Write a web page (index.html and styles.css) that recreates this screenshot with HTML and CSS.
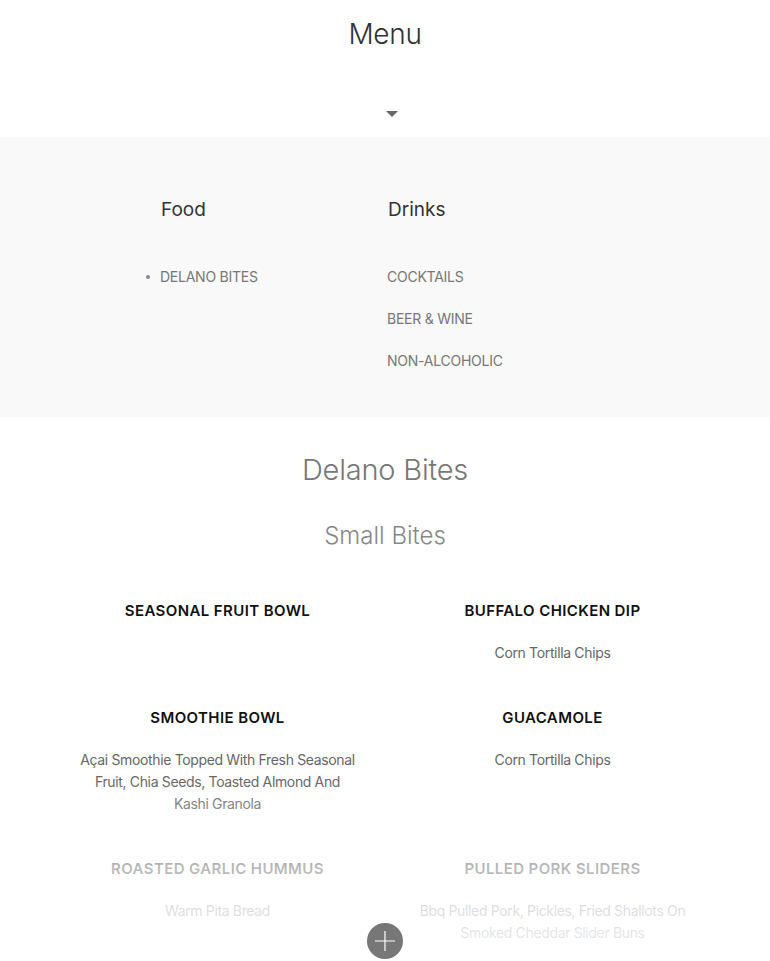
FILE: index.html
```html
<!DOCTYPE html>
<html lang="en">
<head>
    <meta charset="UTF-8">
    <meta name="viewport" content="width=device-width, initial-scale=1.0">
    <title>Menu</title>
    <link rel="stylesheet" href="styles.css">
</head>
<body>
    <header class="page-header">
        <h1>Menu</h1>
        <span class="caret"></span>
    </header>

    <nav class="menu-nav">
        <div class="nav-col">
            <h2>Food</h2>
            <ul class="nav-list bulleted">
                <li>DELANO BITES</li>
            </ul>
        </div>
        <div class="nav-col">
            <h2>Drinks</h2>
            <ul class="nav-list">
                <li>COCKTAILS</li>
                <li>BEER &amp; WINE</li>
                <li>NON-ALCOHOLIC</li>
            </ul>
        </div>
    </nav>

    <section class="menu-section">
        <h2 class="section-title">Delano Bites</h2>
        <h3 class="sub-title">Small Bites</h3>

        <div class="items">
            <div class="item">
                <h4>SEASONAL FRUIT BOWL</h4>
            </div>
            <div class="item">
                <h4>BUFFALO CHICKEN DIP</h4>
                <p>Corn Tortilla Chips</p>
            </div>
            <div class="item">
                <h4>SMOOTHIE BOWL</h4>
                <p>Açai Smoothie Topped With Fresh Seasonal Fruit, Chia Seeds, Toasted Almond And Kashi Granola</p>
            </div>
            <div class="item">
                <h4>GUACAMOLE</h4>
                <p>Corn Tortilla Chips</p>
            </div>
            <div class="item">
                <h4>ROASTED GARLIC HUMMUS</h4>
                <p>Warm Pita Bread</p>
            </div>
            <div class="item">
                <h4>PULLED PORK SLIDERS</h4>
                <p>Bbq Pulled Pork, Pickles, Fried Shallots On Smoked Cheddar Slider Buns</p>
            </div>
        </div>
    </section>

    <div class="fade"></div>
    <button class="more-button" aria-label="More">
        <svg width="22" height="22" viewBox="0 0 22 22">
            <path d="M11 1V21M1 11H21" stroke="#fff" stroke-width="1.2" fill="none"/>
        </svg>
    </button>
</body>
</html>
```

FILE: styles.css
```css
body { font-family: Inter, "Noto Sans", sans-serif; margin: 0; color: #333; background: #fff; overflow: hidden; }

.page-header { text-align: center; padding-top: 16px; height: 137px; box-sizing: border-box; }
.page-header h1 { margin: 0; font-size: 28px; line-height: 36px; font-weight: 300; color: #333; letter-spacing: -0.3px; }
.caret { display: inline-block; margin: 59px 0 0 14px; border-left: 6px solid transparent; border-right: 6px solid transparent; border-top: 6px solid #666; }

.menu-nav { background: #f9f9f9; height: 280px; box-sizing: border-box; padding: 59px 0 0 160px; display: flex; }
.nav-col { width: 227px; }
.nav-col h2 { margin: 0 0 0 1px; font-size: 19px; line-height: 28px; font-weight: 400; color: #333; }
.nav-list { list-style: none; margin: 43px 0 0; padding: 0; }
.nav-list li { font-size: 14px; line-height: 20px; color: #777; margin-bottom: 22px; letter-spacing: -0.25px; }
.nav-list.bulleted li { position: relative; }
.nav-list.bulleted li::before { content: ""; position: absolute; left: -14px; top: 8px; width: 4px; height: 4px; border-radius: 50%; background: #888; }

.menu-section { text-align: center; padding-top: 34px; }
.section-title { margin: 0; font-size: 29px; line-height: 38px; font-weight: 300; color: #777; letter-spacing: -0.2px; }
.sub-title { margin: 32px 0 0; font-size: 24px; line-height: 30px; font-weight: 300; color: #888; }

.items { display: grid; grid-template-columns: 335px 335px; justify-content: center; row-gap: 44px; margin-top: 50px; }
.item { padding: 0 26px; }
.item h4 { margin: 0; font-size: 15px; line-height: 20px; font-weight: 600; color: #111; letter-spacing: 0.4px; }
.item p { margin: 21px 0 0; font-size: 14px; line-height: 22px; color: #666; letter-spacing: -0.35px; }

.fade { position: fixed; left: 0; right: 0; bottom: 0; height: 181px; background: linear-gradient(rgba(255,255,255,0) 0%, rgba(255,255,255,0.7) 48%, rgba(255,255,255,0.88) 100%); pointer-events: none; }
.more-button { position: fixed; left: 367px; bottom: 2px; width: 36px; height: 36px; border-radius: 50%; border: none; background: #777; padding: 0; display: flex; align-items: center; justify-content: center; cursor: pointer; }
```
